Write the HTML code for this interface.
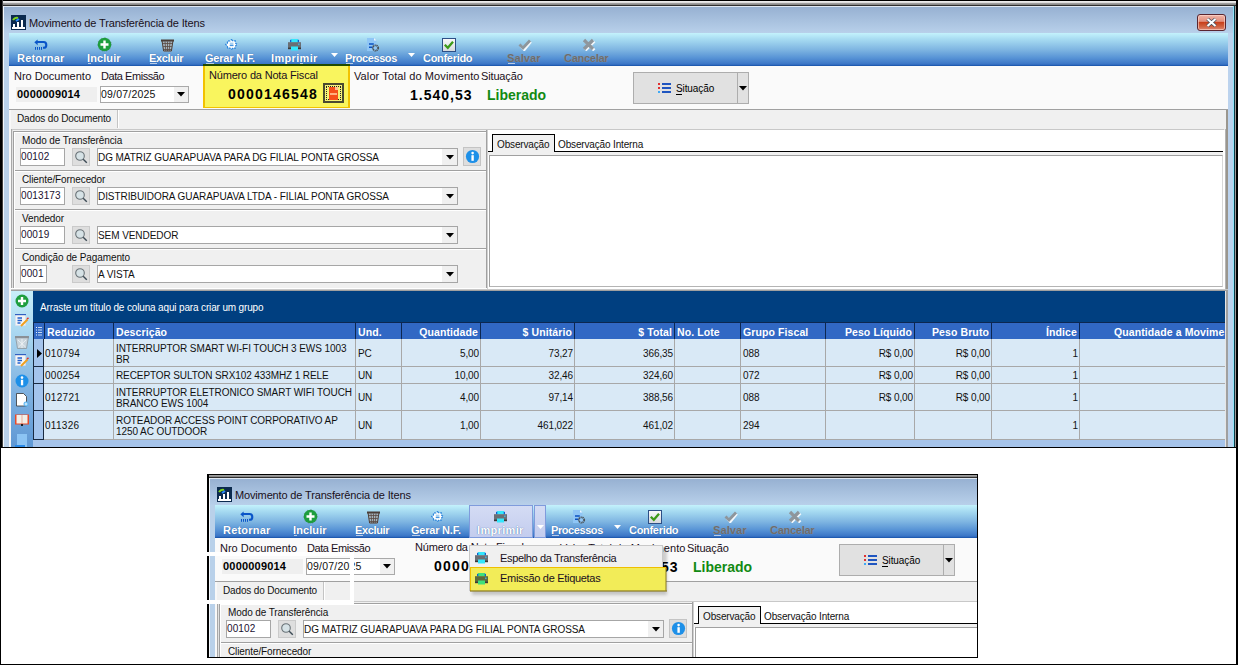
<!DOCTYPE html><html><head><meta charset="utf-8"><style>*{margin:0;padding:0}
body{width:1238px;height:666px;position:relative;overflow:hidden;background:#fff;font-family:"Liberation Sans",sans-serif}
.r,.t{position:absolute}
.t{white-space:nowrap}
</style></head><body><div class="r" style="left:0;top:0;width:1238px;height:448px;overflow:hidden">
<div class="r" style="left:0px;top:0px;width:1238px;height:448px;background:#b9d1ea"></div>
<div class="r" style="left:0px;top:0px;width:1238px;height:1px;background:#000"></div>
<div class="r" style="left:0px;top:1px;width:1238px;height:2px;background:linear-gradient(#f4f4f4,#d8d8d8)"></div>
<div class="r" style="left:0px;top:3px;width:1238px;height:2px;background:linear-gradient(#a8a8a8,#808080)"></div>
<div class="r" style="left:0px;top:5px;width:1238px;height:1px;background:#303030"></div>
<div class="r" style="left:0px;top:6px;width:1238px;height:1px;background:#dfe8f2"></div>
<div class="r" style="left:3px;top:7px;width:1232px;height:26px;background:linear-gradient(#97b1d2,#b8d0ea)"></div>
<div class="r" style="left:0px;top:0px;width:2px;height:448px;background:#000"></div>
<div class="r" style="left:2px;top:0px;width:1px;height:448px;background:#404040"></div>
<div class="r" style="left:3px;top:6px;width:1px;height:442px;background:#f4f8fc"></div>
<div class="r" style="left:9px;top:33px;width:2px;height:415px;background:#f4f4f4"></div>
<div class="r" style="left:1228px;top:33px;width:6px;height:415px;background:#bcd3ee"></div>
<div class="r" style="left:1233px;top:6px;width:1px;height:442px;background:#8ee4f8"></div>
<div class="r" style="left:1234px;top:6px;width:1px;height:442px;background:#0d3a48"></div>
<div class="r" style="left:1235px;top:6px;width:1px;height:442px;background:#a09a98"></div>
<div class="r" style="left:1236px;top:0px;width:2px;height:448px;background:#000"></div>
<div class="r" style="left:1197px;top:14px;width:29px;height:17px;border:1px solid #5a2630;border-radius:3px;box-sizing:border-box;background:linear-gradient(#f0b4a8 0%,#e2907e 42%,#c8401c 50%,#d0603e 75%,#dc8874 100%);box-shadow:inset 0 0 0 1px rgba(255,220,210,0.6)"></div>
<svg class="r" style="left:1197px;top:14px" width="29" height="17"><path d="M10.5 5 L18.5 12 M18.5 5 L10.5 12" stroke="#3a4a5a" stroke-width="3.6"/><path d="M10.5 5 L18.5 12 M18.5 5 L10.5 12" stroke="#fff" stroke-width="2.2"/></svg>
<svg class="r" style="left:11px;top:15px" width="15" height="15"><rect x="0" y="0" width="15" height="15" fill="#0b2a4e"/><path d="M2 5 Q4 2 7 3" stroke="#7ed321" stroke-width="2" fill="none"/><path d="M5 6 L8 4" stroke="#2a8cff" stroke-width="2"/><rect x="2" y="9" width="2" height="3" fill="#fff"/><rect x="6" y="7" width="2" height="5" fill="#fff"/><rect x="10" y="5" width="2" height="7" fill="#fff"/><rect x="1" y="12" width="13" height="2" fill="#fff"/></svg>
<div class="t" style="left:29px;top:18px;font-size:11px;line-height:11px;color:#1a1020;letter-spacing:-0.15px">Movimento de Transferência de Itens</div>
<div class="r" style="left:9px;top:33px;width:1219px;height:33px;background:linear-gradient(#c4f2fc 0%,#a8dcf2 18%,#7fb6e2 50%,#5894d6 75%,#3e79c8 92%,#245fb8 100%)"></div>
<div class="r" style="left:9px;top:65px;width:1219px;height:1px;background:#1f5ab0"></div>
<div class="t" style="left:17px;top:53px;font-size:11px;line-height:11px;font-weight:bold;color:#fff;text-shadow:0 0 1px #2a5a9a;letter-spacing:0.2px">Retornar</div>
<div class="t" style="left:87px;top:53px;font-size:11px;line-height:11px;font-weight:bold;color:#fff;text-shadow:0 0 1px #2a5a9a;letter-spacing:0.1px">Incluir</div>
<div class="t" style="left:149px;top:53px;font-size:11px;line-height:11px;font-weight:bold;color:#fff;text-shadow:0 0 1px #2a5a9a;letter-spacing:-0.35px">Excluir</div>
<div class="t" style="left:205px;top:53px;font-size:11px;line-height:11px;font-weight:bold;color:#fff;text-shadow:0 0 1px #2a5a9a;letter-spacing:-0.22px">Gerar N.F.</div>
<div class="t" style="left:271px;top:53px;font-size:11px;line-height:11px;font-weight:bold;color:#fff;text-shadow:0 0 1px #2a5a9a;letter-spacing:0.34px">Imprimir</div>
<div class="t" style="left:345px;top:53px;font-size:11px;line-height:11px;font-weight:bold;color:#fff;text-shadow:0 0 1px #2a5a9a;letter-spacing:-0.42px">Processos</div>
<div class="t" style="left:423px;top:53px;font-size:11px;line-height:11px;font-weight:bold;color:#fff;text-shadow:0 0 1px #2a5a9a;letter-spacing:-0.3px">Conferido</div>
<div class="t" style="left:507px;top:53px;font-size:11px;line-height:11px;font-weight:bold;color:#6c6c6c;text-shadow:0 0 1px #9ab;letter-spacing:0.1px">Salvar</div>
<div class="t" style="left:564px;top:53px;font-size:11px;line-height:11px;font-weight:bold;color:#6c6c6c;text-shadow:0 0 1px #9ab;letter-spacing:-0.26px">Cancelar</div>
<div class="r" style="left:88px;top:63px;width:3px;height:1px;background:#b8cce6"></div>
<div class="r" style="left:150px;top:63px;width:7px;height:1px;background:#b8cce6"></div>
<div class="r" style="left:206px;top:63px;width:8px;height:1px;background:#b8cce6"></div>
<div class="r" style="left:300px;top:63px;width:3px;height:1px;background:#b8cce6"></div>
<div class="r" style="left:346px;top:63px;width:7px;height:1px;background:#b8cce6"></div>
<div class="r" style="left:508px;top:63px;width:7px;height:1px;background:#b8cce6"></div>
<svg class="r" style="left:331px;top:53px" width="7" height="4"><path d="M0 0 L7 0 L3.5 4Z" fill="#fff"/></svg>
<svg class="r" style="left:408px;top:53px" width="7" height="4"><path d="M0 0 L7 0 L3.5 4Z" fill="#fff"/></svg>
<svg class="r" style="left:34px;top:39px" width="14" height="12"><path d="M0.3 3.2 L3.6 0.4 V6.2Z" fill="#0a55c8"/><path d="M3 3 H9.6 A2.7 2.9 0 0 1 9.6 8.8 H9" stroke="#0a55c8" stroke-width="2.1" fill="none"/><path d="M1.5 8 V10.8 M3.5 8 V10.8 M5.5 8 V10.8 M7.5 8 V10.8" stroke="#0a55c8" stroke-width="1"/></svg>
<svg class="r" style="left:97px;top:37px" width="15" height="15"><circle cx="7.5" cy="7.5" r="6.8" fill="#1e9e3e" stroke="#4a4a4a" stroke-width="0.4" stroke-dasharray="1 3"/><path d="M7.5 3.5 V11.5 M3.5 7.5 H11.5" stroke="#fff" stroke-width="2.4"/></svg>
<svg class="r" style="left:161px;top:39px" width="13" height="13"><path d="M0.5 1 H12.5 L10.8 12.5 H2.2Z" fill="#a4b4be"/><path d="M1.8 4.5 H11.2 M2.2 7.5 H10.8 M2.6 10.5 H10.4 M4 2.5 L4.8 12 M6.5 2.5 V12 M9 2.5 L8.2 12" stroke="#5a4a42" stroke-width="0.8"/><path d="M1 1.5 L2.6 12 H10.4 L12 1.5" fill="none" stroke="#4a3e38" stroke-width="1"/><rect x="0" y="0.5" width="13" height="2" fill="#4a3e38"/></svg>
<svg class="r" style="left:225px;top:39px" width="13" height="11"><path d="M6.5 0.6 L8 2 L10.4 1.8 L10.6 4.2 L12.3 5.5 L10.6 6.8 L10.4 9.2 L8 9 L6.5 10.4 L5 9 L2.6 9.2 L2.4 6.8 L0.7 5.5 L2.4 4.2 L2.6 1.8 L5 2Z" fill="#fff" stroke="#2d86dc" stroke-width="1.2" stroke-dasharray="2.2 1"/><rect x="4.8" y="3.6" width="3.6" height="3.4" fill="#a8d0f0"/><rect x="4.8" y="6.2" width="3.6" height="0.9" fill="#2d86dc"/></svg>
<svg class="r" style="left:288px;top:39px" width="14" height="12"><rect x="3" y="0" width="7" height="3.5" fill="#34e6fc"/><rect x="2" y="0.8" width="1.3" height="2.6" fill="#1060d0"/><rect x="9.7" y="0.8" width="1.3" height="2.6" fill="#1060d0"/><rect x="0" y="3.2" width="13" height="6.2" fill="#6a6e74"/><rect x="3" y="7.5" width="7" height="4" fill="#34e6fc"/><rect x="0" y="8.6" width="3" height="1.6" fill="#3a3a3a"/><rect x="10" y="8.6" width="3" height="1.6" fill="#3a3a3a"/><rect x="10.2" y="4.5" width="1.3" height="1.6" fill="#40b8f0"/></svg>
<svg class="r" style="left:367px;top:38px" width="13" height="14"><path d="M0 0 H7 L9.5 2.5 V13 H0Z" fill="#8fc6f6"/><path d="M7 0 V2.5 H9.5Z" fill="#eef6ff"/><path d="M2 6 H6.8 M2 9.3 H5.5" stroke="#0a50c0" stroke-width="1.4"/><circle cx="8.5" cy="10" r="2.7" fill="none" stroke="#4a5258" stroke-width="1.8" stroke-dasharray="1.3 0.6"/></svg>
<svg class="r" style="left:442px;top:38px" width="14" height="14"><defs><linearGradient id="cbg" x1="0" y1="0" x2="0" y2="1"><stop offset="0" stop-color="#fafafa"/><stop offset="1" stop-color="#d4d8dc"/></linearGradient></defs><rect x="0.5" y="0.5" width="13" height="13" fill="url(#cbg)" stroke="#2d4f86"/><path d="M2.8 6.8 L5.8 9.8 L11 3.8" stroke="#3c9a18" stroke-width="2.3" fill="none"/></svg>
<svg class="r" style="left:518px;top:39px" width="14" height="12"><path d="M2.5 6.5 L5.5 10 L12 2" stroke="#f4f8fc" stroke-width="2.6" fill="none" transform="translate(0.8,0.8)"/><path d="M1.5 5.5 L5 9 L12 1.5" stroke="#8e969c" stroke-width="2.8" fill="none"/></svg>
<svg class="r" style="left:582px;top:38px" width="14" height="13"><path d="M2.5 2.5 L11.5 11.5 M11.5 2.5 L2.5 11.5" stroke="#f4f8fc" stroke-width="3" fill="none" transform="translate(0.8,0.8)"/><path d="M2 2 L11 11 M11 2 L2 11" stroke="#8e969c" stroke-width="3.2" fill="none"/></svg>
<div class="r" style="left:9px;top:66px;width:1219px;height:43px;background:#fafafa"></div>
<div class="r" style="left:9px;top:109px;width:1219px;height:1px;background:#a0a0a0"></div>
<div class="t" style="left:14px;top:71px;font-size:11px;line-height:11px;color:#1a1020;">Nro Documento</div>
<div class="t" style="left:101px;top:71px;font-size:11px;line-height:11px;color:#1a1020;letter-spacing:-0.45px">Data Emissão</div>
<div class="r" style="left:16px;top:87px;width:81px;height:15px;background:#efefef"></div>
<div class="t" style="left:17px;top:89px;font-size:11px;line-height:11px;font-weight:bold;letter-spacing:0.2px">0000009014</div>
<div class="r" style="left:100px;top:86px;width:89px;height:17px;background:#fff;border:1px solid #a9a9a9;box-sizing:border-box"></div>
<div class="t" style="left:101px;top:89px;font-size:10.5px;line-height:10.5px;color:#111;letter-spacing:0.2px">09/07/2025</div>
<div class="r" style="left:174px;top:87px;width:14px;height:15px;background:#f0f0f0"></div>
<svg class="r" style="left:177px;top:92px" width="8" height="5"><path d="M0 0 H8 L4 4.5Z" fill="#000"/></svg>
<div class="r" style="left:203px;top:64px;width:147px;height:44px;background:#f9f55e;border-left:2px solid #f2c200;border-right:2px solid #f2c200;border-bottom:1px solid #f2c200;box-sizing:border-box"></div>
<div class="r" style="left:203px;top:64px;width:147px;height:2px;background:#1f4a00"></div>
<div class="t" style="left:209px;top:70px;font-size:11px;line-height:11px;color:#1a1020;letter-spacing:-0.18px">Número da Nota Fiscal</div>
<div class="t" style="left:228px;top:87px;font-size:14px;line-height:14px;font-weight:bold;letter-spacing:1.2px">0000146548</div>
<div class="r" style="left:323px;top:83px;width:21px;height:20px;background:#f6f276;border:2px solid #4a4a30;box-sizing:border-box"></div>
<div class="r" style="left:326px;top:86px;width:15px;height:14px;border:1px dotted #222;box-sizing:border-box"></div>
<div class="r" style="left:329px;top:87px;width:9px;height:13px;background:#f5501a"></div>
<div class="r" style="left:335px;top:87px;width:3px;height:3px;background:#ffc090"></div>
<div class="r" style="left:330px;top:93px;width:7px;height:2px;background:#ffb080"></div>
<div class="t" style="left:354px;top:71px;font-size:11px;line-height:11px;color:#1a1020;letter-spacing:0.1px">Valor Total do Movimento</div>
<div class="t" style="left:481px;top:71px;font-size:11px;line-height:11px;color:#1a1020;letter-spacing:-0.15px">Situação</div>
<div class="t" style="left:410px;top:88px;font-size:14px;line-height:14px;font-weight:bold;letter-spacing:1px">1.540,53</div>
<div class="t" style="left:487px;top:88px;font-size:14px;line-height:14px;font-weight:bold;color:#128a12;">Liberado</div>
<div class="r" style="left:633px;top:72px;width:116px;height:32px;background:#e1e1e1;border:1px solid #adadad;box-sizing:border-box"></div>
<div class="r" style="left:737px;top:73px;width:1px;height:30px;background:#adadad"></div>
<svg class="r" style="left:739px;top:86px" width="8" height="5"><path d="M0 0 H8 L4 4.5Z" fill="#000"/></svg>
<svg class="r" style="left:658px;top:83px" width="13" height="10"><rect x="0" y="0" width="2" height="2" fill="#e03030"/><rect x="0" y="4" width="2" height="2" fill="#e03030"/><rect x="0" y="8" width="2" height="2" fill="#3fa9f5"/><rect x="4" y="0" width="9" height="2" fill="#1f55c0"/><rect x="4" y="4" width="9" height="2" fill="#1f55c0"/><rect x="4" y="8" width="9" height="2" fill="#1f55c0"/></svg>
<div class="t" style="left:676px;top:84px;font-size:10px;line-height:10px;letter-spacing:-0.1px">Situação</div>
<div class="r" style="left:676px;top:94px;width:6px;height:1px;background:#000"></div>
<div class="r" style="left:11px;top:110px;width:1217px;height:337px;background:#f0f0f0"></div>
<div class="r" style="left:9px;top:110px;width:2px;height:337px;background:#f8f8f8"></div>
<div class="r" style="left:117px;top:110px;width:1px;height:18px;background:#c4c4c4"></div>
<div class="r" style="left:118px;top:110px;width:1px;height:18px;background:#fff"></div>
<div class="t" style="left:17px;top:114px;font-size:10px;line-height:10px;color:#111;letter-spacing:-0.15px">Dados do Documento</div>
<div class="r" style="left:11px;top:129px;width:1217px;height:1px;background:#c8c8c8"></div>
<div class="r" style="left:11px;top:129px;width:1px;height:161px;background:#a8a8a8"></div>
<div class="r" style="left:12px;top:130px;width:1px;height:159px;background:#e0e0e0"></div>
<div class="r" style="left:1226px;top:110px;width:2px;height:180px;background:#9a968e"></div>
<div class="r" style="left:1224px;top:129px;width:1px;height:161px;background:#e8e8e8"></div>
<div class="r" style="left:1225px;top:129px;width:1px;height:161px;background:#b4b4b4"></div>
<div class="r" style="left:13px;top:131px;width:473px;height:1px;background:#a0a0a0"></div>
<div class="r" style="left:13px;top:131px;width:1px;height:157px;background:#a0a0a0"></div>
<div class="r" style="left:14px;top:132px;width:472px;height:1px;background:#fff"></div>
<div class="r" style="left:14px;top:132px;width:1px;height:156px;background:#fff"></div>
<div class="r" style="left:486px;top:130px;width:1px;height:160px;background:#a0a0a0"></div>
<div class="r" style="left:487px;top:130px;width:1px;height:160px;background:#d0d0d0"></div>
<div class="r" style="left:11px;top:288px;width:476px;height:1px;background:#fff"></div>
<div class="r" style="left:11px;top:289px;width:1217px;height:1px;background:#c8c8c8"></div>
<div class="r" style="left:11px;top:290px;width:1217px;height:1px;background:#a0a0a0"></div>
<div class="t" style="left:22px;top:136px;font-size:10px;line-height:10px;color:#111;letter-spacing:-0.1px">Modo de Transferência</div>
<div class="r" style="left:20px;top:148px;width:45px;height:18px;background:#fff;border:1px solid #a6a6a6;box-sizing:border-box"></div>
<div class="t" style="left:21px;top:152px;font-size:10px;line-height:10px;color:#1a1030;letter-spacing:0.1px">00102</div>
<div class="r" style="left:72px;top:148px;width:18px;height:18px;background:#dedede;border:1px solid #cacaca;box-sizing:border-box"></div>
<svg class="r" style="left:74px;top:150px" width="14" height="14"><circle cx="6" cy="6" r="4.3" fill="#d6e2e6" stroke="#6a7378" stroke-width="1.1"/><path d="M9.2 9.2 L12.8 12.8" stroke="#3c4a55" stroke-width="1.4"/></svg>
<div class="r" style="left:97px;top:148px;width:361px;height:18px;background:#fff;border:1px solid #a6a6a6;box-sizing:border-box"></div>
<div class="t" style="left:98px;top:153px;font-size:10px;line-height:10px;color:#111;letter-spacing:-0.07px">DG MATRIZ GUARAPUAVA PARA DG FILIAL PONTA GROSSA</div>
<div class="r" style="left:442px;top:149px;width:15px;height:16px;background:#f0f0f0"></div>
<svg class="r" style="left:446px;top:155px" width="8" height="5"><path d="M0 0 H8 L4 4.5Z" fill="#000"/></svg>
<div class="r" style="left:463px;top:147px;width:18px;height:19px;background:#dedede;border:1px solid #c4c4c4;box-sizing:border-box"></div>
<svg class="r" style="left:465px;top:149px" width="15" height="15"><circle cx="7.5" cy="7.5" r="6.6" fill="#1e90e8"/><rect x="6.4" y="6.2" width="2.4" height="5.6" fill="#fff"/><circle cx="7.6" cy="4.1" r="1.3" fill="#fff"/></svg>
<div class="r" style="left:15px;top:170px;width:471px;height:1px;background:#a0a0a0"></div>
<div class="r" style="left:15px;top:171px;width:471px;height:1px;background:#fff"></div>
<div class="t" style="left:22px;top:175px;font-size:10px;line-height:10px;color:#111;letter-spacing:-0.1px">Cliente/Fornecedor</div>
<div class="r" style="left:20px;top:187px;width:45px;height:18px;background:#fff;border:1px solid #a6a6a6;box-sizing:border-box"></div>
<div class="t" style="left:21px;top:191px;font-size:10px;line-height:10px;color:#1a1030;letter-spacing:0.1px">0013173</div>
<div class="r" style="left:72px;top:187px;width:18px;height:18px;background:#dedede;border:1px solid #cacaca;box-sizing:border-box"></div>
<svg class="r" style="left:74px;top:189px" width="14" height="14"><circle cx="6" cy="6" r="4.3" fill="#d6e2e6" stroke="#6a7378" stroke-width="1.1"/><path d="M9.2 9.2 L12.8 12.8" stroke="#3c4a55" stroke-width="1.4"/></svg>
<div class="r" style="left:97px;top:187px;width:361px;height:18px;background:#fff;border:1px solid #a6a6a6;box-sizing:border-box"></div>
<div class="t" style="left:98px;top:192px;font-size:10px;line-height:10px;color:#111;letter-spacing:-0.07px">DISTRIBUIDORA GUARAPUAVA LTDA - FILIAL PONTA GROSSA</div>
<div class="r" style="left:442px;top:188px;width:15px;height:16px;background:#f0f0f0"></div>
<svg class="r" style="left:446px;top:194px" width="8" height="5"><path d="M0 0 H8 L4 4.5Z" fill="#000"/></svg>
<div class="r" style="left:15px;top:209px;width:471px;height:1px;background:#a0a0a0"></div>
<div class="r" style="left:15px;top:210px;width:471px;height:1px;background:#fff"></div>
<div class="t" style="left:22px;top:214px;font-size:10px;line-height:10px;color:#111;letter-spacing:-0.1px">Vendedor</div>
<div class="r" style="left:20px;top:226px;width:45px;height:18px;background:#fff;border:1px solid #a6a6a6;box-sizing:border-box"></div>
<div class="t" style="left:21px;top:230px;font-size:10px;line-height:10px;color:#1a1030;letter-spacing:0.1px">00019</div>
<div class="r" style="left:72px;top:226px;width:18px;height:18px;background:#dedede;border:1px solid #cacaca;box-sizing:border-box"></div>
<svg class="r" style="left:74px;top:228px" width="14" height="14"><circle cx="6" cy="6" r="4.3" fill="#d6e2e6" stroke="#6a7378" stroke-width="1.1"/><path d="M9.2 9.2 L12.8 12.8" stroke="#3c4a55" stroke-width="1.4"/></svg>
<div class="r" style="left:97px;top:226px;width:361px;height:18px;background:#fff;border:1px solid #a6a6a6;box-sizing:border-box"></div>
<div class="t" style="left:98px;top:231px;font-size:10px;line-height:10px;color:#111;letter-spacing:-0.07px">SEM VENDEDOR</div>
<div class="r" style="left:442px;top:227px;width:15px;height:16px;background:#f0f0f0"></div>
<svg class="r" style="left:446px;top:233px" width="8" height="5"><path d="M0 0 H8 L4 4.5Z" fill="#000"/></svg>
<div class="r" style="left:15px;top:248px;width:471px;height:1px;background:#a0a0a0"></div>
<div class="r" style="left:15px;top:249px;width:471px;height:1px;background:#fff"></div>
<div class="t" style="left:22px;top:253px;font-size:10px;line-height:10px;color:#111;letter-spacing:-0.1px">Condição de Pagamento</div>
<div class="r" style="left:20px;top:265px;width:27px;height:18px;background:#fff;border:1px solid #a6a6a6;box-sizing:border-box"></div>
<div class="t" style="left:21px;top:269px;font-size:10px;line-height:10px;color:#1a1030;letter-spacing:0.1px">0001</div>
<div class="r" style="left:72px;top:265px;width:18px;height:18px;background:#dedede;border:1px solid #cacaca;box-sizing:border-box"></div>
<svg class="r" style="left:74px;top:267px" width="14" height="14"><circle cx="6" cy="6" r="4.3" fill="#d6e2e6" stroke="#6a7378" stroke-width="1.1"/><path d="M9.2 9.2 L12.8 12.8" stroke="#3c4a55" stroke-width="1.4"/></svg>
<div class="r" style="left:97px;top:265px;width:361px;height:18px;background:#fff;border:1px solid #a6a6a6;box-sizing:border-box"></div>
<div class="t" style="left:98px;top:270px;font-size:10px;line-height:10px;color:#111;letter-spacing:-0.07px">A VISTA</div>
<div class="r" style="left:442px;top:266px;width:15px;height:16px;background:#f0f0f0"></div>
<svg class="r" style="left:446px;top:272px" width="8" height="5"><path d="M0 0 H8 L4 4.5Z" fill="#000"/></svg>
<div class="r" style="left:488px;top:130px;width:737px;height:159px;background:#fff"></div>
<div class="r" style="left:488px;top:151px;width:735px;height:1px;background:#000"></div>
<div class="r" style="left:492px;top:134px;width:63px;height:18px;background:#f0f0f0;border:1px solid #000;border-bottom:none;box-sizing:border-box"></div>
<div class="r" style="left:488px;top:152px;width:735px;height:3px;background:#f0f0f0"></div>
<div class="t" style="left:497px;top:140px;font-size:10px;line-height:10px;color:#111;letter-spacing:-0.15px">Observação</div>
<div class="t" style="left:558px;top:140px;font-size:10px;line-height:10px;color:#111;letter-spacing:-0.15px">Observação Interna</div>
<div class="r" style="left:489px;top:155px;width:734px;height:132px;background:#fff;border:1px solid #a0a0a0;border-right-color:#d8d8d8;border-bottom-color:#b4b4b4;box-sizing:border-box"></div>
<div class="r" style="left:11px;top:291px;width:1214px;height:156px;background:#a6c6ec"></div>
<div class="r" style="left:11px;top:291px;width:22px;height:156px;background:linear-gradient(#c8eef9 0%,#a6d4ef 30%,#7fb1e0 65%,#5f98d4 100%)"></div>
<div class="r" style="left:33px;top:291px;width:1192px;height:32px;background:#003f80"></div>
<div class="t" style="left:40px;top:303px;font-size:10px;line-height:10px;color:#fff;letter-spacing:-0.15px">Arraste um título de coluna aqui para criar um grupo</div>
<div class="r" style="left:1225px;top:291px;width:1px;height:156px;background:#e6e6e6"></div>
<div class="r" style="left:1226px;top:291px;width:2px;height:156px;background:#a0a0a0"></div>
<div class="r" style="left:33px;top:322px;width:1192px;height:18px;background:#0c2750"></div>
<div class="r" style="left:34px;top:323px;width:10px;height:16px;background:#3168c4"></div>
<div class="r" style="left:45px;top:323px;width:68px;height:16px;background:#3168c4"></div>
<div class="r" style="left:114px;top:323px;width:241px;height:16px;background:#3168c4"></div>
<div class="r" style="left:356px;top:323px;width:45px;height:16px;background:#3168c4"></div>
<div class="r" style="left:402px;top:323px;width:78px;height:16px;background:#3168c4"></div>
<div class="r" style="left:481px;top:323px;width:93px;height:16px;background:#3168c4"></div>
<div class="r" style="left:575px;top:323px;width:99px;height:16px;background:#3168c4"></div>
<div class="r" style="left:675px;top:323px;width:65px;height:16px;background:#3168c4"></div>
<div class="r" style="left:741px;top:323px;width:84px;height:16px;background:#3168c4"></div>
<div class="r" style="left:826px;top:323px;width:88px;height:16px;background:#3168c4"></div>
<div class="r" style="left:915px;top:323px;width:76px;height:16px;background:#3168c4"></div>
<div class="r" style="left:992px;top:323px;width:87px;height:16px;background:#3168c4"></div>
<div class="r" style="left:1080px;top:323px;width:145px;height:16px;background:#3168c4"></div>
<svg class="r" style="left:35px;top:326px" width="8" height="11"><path d="M1 1.5h1M1 4h1M1 6.5h1M1 9h1" stroke="#e8f0ff" stroke-width="1"/><path d="M3 1.5h4M3 4h4M3 6.5h4M3 9h4" stroke="#c8d8f0" stroke-width="1.2"/></svg>
<div class="t" style="left:47px;top:327px;font-size:10.5px;line-height:10.5px;font-weight:bold;color:#fff;letter-spacing:0.1px">Reduzido</div>
<div class="t" style="left:116px;top:327px;font-size:10.5px;line-height:10.5px;font-weight:bold;color:#fff;letter-spacing:0.1px">Descrição</div>
<div class="t" style="left:358px;top:327px;font-size:10.5px;line-height:10.5px;font-weight:bold;color:#fff;letter-spacing:0.1px">Und.</div>
<div class="t" style="left:358px;width:120px;text-align:right;top:327px;font-size:10.5px;line-height:10.5px;font-weight:bold;color:#fff;letter-spacing:0.1px">Quantidade</div>
<div class="t" style="left:452px;width:120px;text-align:right;top:327px;font-size:10.5px;line-height:10.5px;font-weight:bold;color:#fff;letter-spacing:0.1px">$ Unitário</div>
<div class="t" style="left:552px;width:120px;text-align:right;top:327px;font-size:10.5px;line-height:10.5px;font-weight:bold;color:#fff;letter-spacing:0.1px">$ Total</div>
<div class="t" style="left:677px;top:327px;font-size:10.5px;line-height:10.5px;font-weight:bold;color:#fff;letter-spacing:0.1px">No. Lote</div>
<div class="t" style="left:743px;top:327px;font-size:10.5px;line-height:10.5px;font-weight:bold;color:#fff;letter-spacing:0.1px">Grupo Fiscal</div>
<div class="t" style="left:792px;width:120px;text-align:right;top:327px;font-size:10.5px;line-height:10.5px;font-weight:bold;color:#fff;letter-spacing:0.1px">Peso Líquido</div>
<div class="t" style="left:869px;width:120px;text-align:right;top:327px;font-size:10.5px;line-height:10.5px;font-weight:bold;color:#fff;letter-spacing:0.1px">Peso Bruto</div>
<div class="t" style="left:957px;width:120px;text-align:right;top:327px;font-size:10.5px;line-height:10.5px;font-weight:bold;color:#fff;letter-spacing:0.1px">Índice</div>
<div class="r" style="left:1080px;top:323px;width:145px;height:16px;overflow:hidden"><div class="t" style="left:34px;top:4px;font-size:10.5px;line-height:10.5px;font-weight:bold;color:#fff;letter-spacing:0.1px">Quantidade a Movimentar</div></div>
<div class="r" style="left:44px;top:339px;width:1181px;height:28px;background:#d9e9f6"></div>
<div class="r" style="left:33px;top:339px;width:11px;height:28px;background:#a4c4ec"></div>
<div class="r" style="left:33px;top:366px;width:11px;height:1px;background:#1a2a40"></div>
<div class="r" style="left:44px;top:366px;width:1181px;height:1px;background:#a8a8a8"></div>
<div class="r" style="left:33px;top:339px;width:1px;height:28px;background:#1a2a40"></div>
<div class="r" style="left:43px;top:339px;width:1px;height:28px;background:#1a2a40"></div>
<div class="r" style="left:113px;top:339px;width:1px;height:27px;background:#a8a8a8"></div>
<div class="r" style="left:355px;top:339px;width:1px;height:27px;background:#a8a8a8"></div>
<div class="r" style="left:401px;top:339px;width:1px;height:27px;background:#a8a8a8"></div>
<div class="r" style="left:480px;top:339px;width:1px;height:27px;background:#a8a8a8"></div>
<div class="r" style="left:574px;top:339px;width:1px;height:27px;background:#a8a8a8"></div>
<div class="r" style="left:674px;top:339px;width:1px;height:27px;background:#a8a8a8"></div>
<div class="r" style="left:740px;top:339px;width:1px;height:27px;background:#a8a8a8"></div>
<div class="r" style="left:825px;top:339px;width:1px;height:27px;background:#a8a8a8"></div>
<div class="r" style="left:914px;top:339px;width:1px;height:27px;background:#a8a8a8"></div>
<div class="r" style="left:991px;top:339px;width:1px;height:27px;background:#a8a8a8"></div>
<div class="r" style="left:1079px;top:339px;width:1px;height:27px;background:#a8a8a8"></div>
<div class="t" style="left:45px;top:349px;font-size:10px;line-height:10px;color:#111;letter-spacing:0.3px">010794</div>
<div class="t" style="left:116px;top:344px;font-size:10px;line-height:10px;color:#111;letter-spacing:-0.08px">INTERRUPTOR SMART WI-FI TOUCH 3 EWS 1003</div>
<div class="t" style="left:116px;top:355px;font-size:10px;line-height:10px;color:#111;letter-spacing:-0.08px">BR</div>
<div class="t" style="left:358px;top:349px;font-size:10px;line-height:10px;color:#111;letter-spacing:-0.1px">PC</div>
<div class="t" style="left:379px;width:100px;text-align:right;top:349px;font-size:10px;line-height:10px;color:#111;letter-spacing:-0.1px">5,00</div>
<div class="t" style="left:473px;width:100px;text-align:right;top:349px;font-size:10px;line-height:10px;color:#111;letter-spacing:-0.1px">73,27</div>
<div class="t" style="left:573px;width:100px;text-align:right;top:349px;font-size:10px;line-height:10px;color:#111;letter-spacing:-0.1px">366,35</div>
<div class="t" style="left:743px;top:349px;font-size:10px;line-height:10px;color:#111;letter-spacing:-0.1px">088</div>
<div class="t" style="left:813px;width:100px;text-align:right;top:349px;font-size:10px;line-height:10px;color:#111;letter-spacing:-0.1px">R$ 0,00</div>
<div class="t" style="left:890px;width:100px;text-align:right;top:349px;font-size:10px;line-height:10px;color:#111;letter-spacing:-0.1px">R$ 0,00</div>
<div class="t" style="left:978px;width:100px;text-align:right;top:349px;font-size:10px;line-height:10px;color:#111;letter-spacing:-0.1px">1</div>
<div class="r" style="left:44px;top:367px;width:1181px;height:17px;background:#d9e9f6"></div>
<div class="r" style="left:33px;top:367px;width:11px;height:17px;background:#a4c4ec"></div>
<div class="r" style="left:33px;top:383px;width:11px;height:1px;background:#1a2a40"></div>
<div class="r" style="left:44px;top:383px;width:1181px;height:1px;background:#a8a8a8"></div>
<div class="r" style="left:33px;top:367px;width:1px;height:17px;background:#1a2a40"></div>
<div class="r" style="left:43px;top:367px;width:1px;height:17px;background:#1a2a40"></div>
<div class="r" style="left:113px;top:367px;width:1px;height:16px;background:#a8a8a8"></div>
<div class="r" style="left:355px;top:367px;width:1px;height:16px;background:#a8a8a8"></div>
<div class="r" style="left:401px;top:367px;width:1px;height:16px;background:#a8a8a8"></div>
<div class="r" style="left:480px;top:367px;width:1px;height:16px;background:#a8a8a8"></div>
<div class="r" style="left:574px;top:367px;width:1px;height:16px;background:#a8a8a8"></div>
<div class="r" style="left:674px;top:367px;width:1px;height:16px;background:#a8a8a8"></div>
<div class="r" style="left:740px;top:367px;width:1px;height:16px;background:#a8a8a8"></div>
<div class="r" style="left:825px;top:367px;width:1px;height:16px;background:#a8a8a8"></div>
<div class="r" style="left:914px;top:367px;width:1px;height:16px;background:#a8a8a8"></div>
<div class="r" style="left:991px;top:367px;width:1px;height:16px;background:#a8a8a8"></div>
<div class="r" style="left:1079px;top:367px;width:1px;height:16px;background:#a8a8a8"></div>
<div class="t" style="left:45px;top:371px;font-size:10px;line-height:10px;color:#111;letter-spacing:0.3px">000254</div>
<div class="t" style="left:116px;top:371px;font-size:10px;line-height:10px;color:#111;letter-spacing:-0.1px">RECEPTOR SULTON SRX102 433MHZ 1 RELE</div>
<div class="t" style="left:358px;top:371px;font-size:10px;line-height:10px;color:#111;letter-spacing:-0.1px">UN</div>
<div class="t" style="left:379px;width:100px;text-align:right;top:371px;font-size:10px;line-height:10px;color:#111;letter-spacing:-0.1px">10,00</div>
<div class="t" style="left:473px;width:100px;text-align:right;top:371px;font-size:10px;line-height:10px;color:#111;letter-spacing:-0.1px">32,46</div>
<div class="t" style="left:573px;width:100px;text-align:right;top:371px;font-size:10px;line-height:10px;color:#111;letter-spacing:-0.1px">324,60</div>
<div class="t" style="left:743px;top:371px;font-size:10px;line-height:10px;color:#111;letter-spacing:-0.1px">072</div>
<div class="t" style="left:813px;width:100px;text-align:right;top:371px;font-size:10px;line-height:10px;color:#111;letter-spacing:-0.1px">R$ 0,00</div>
<div class="t" style="left:890px;width:100px;text-align:right;top:371px;font-size:10px;line-height:10px;color:#111;letter-spacing:-0.1px">R$ 0,00</div>
<div class="t" style="left:978px;width:100px;text-align:right;top:371px;font-size:10px;line-height:10px;color:#111;letter-spacing:-0.1px">1</div>
<div class="r" style="left:44px;top:384px;width:1181px;height:27px;background:#d9e9f6"></div>
<div class="r" style="left:33px;top:384px;width:11px;height:27px;background:#a4c4ec"></div>
<div class="r" style="left:33px;top:410px;width:11px;height:1px;background:#1a2a40"></div>
<div class="r" style="left:44px;top:410px;width:1181px;height:1px;background:#a8a8a8"></div>
<div class="r" style="left:33px;top:384px;width:1px;height:27px;background:#1a2a40"></div>
<div class="r" style="left:43px;top:384px;width:1px;height:27px;background:#1a2a40"></div>
<div class="r" style="left:113px;top:384px;width:1px;height:26px;background:#a8a8a8"></div>
<div class="r" style="left:355px;top:384px;width:1px;height:26px;background:#a8a8a8"></div>
<div class="r" style="left:401px;top:384px;width:1px;height:26px;background:#a8a8a8"></div>
<div class="r" style="left:480px;top:384px;width:1px;height:26px;background:#a8a8a8"></div>
<div class="r" style="left:574px;top:384px;width:1px;height:26px;background:#a8a8a8"></div>
<div class="r" style="left:674px;top:384px;width:1px;height:26px;background:#a8a8a8"></div>
<div class="r" style="left:740px;top:384px;width:1px;height:26px;background:#a8a8a8"></div>
<div class="r" style="left:825px;top:384px;width:1px;height:26px;background:#a8a8a8"></div>
<div class="r" style="left:914px;top:384px;width:1px;height:26px;background:#a8a8a8"></div>
<div class="r" style="left:991px;top:384px;width:1px;height:26px;background:#a8a8a8"></div>
<div class="r" style="left:1079px;top:384px;width:1px;height:26px;background:#a8a8a8"></div>
<div class="t" style="left:45px;top:393px;font-size:10px;line-height:10px;color:#111;letter-spacing:0.3px">012721</div>
<div class="t" style="left:116px;top:388px;font-size:10px;line-height:10px;color:#111;letter-spacing:-0.08px">INTERRUPTOR ELETRONICO SMART WIFI TOUCH</div>
<div class="t" style="left:116px;top:399px;font-size:10px;line-height:10px;color:#111;letter-spacing:-0.08px">BRANCO EWS 1004</div>
<div class="t" style="left:358px;top:393px;font-size:10px;line-height:10px;color:#111;letter-spacing:-0.1px">UN</div>
<div class="t" style="left:379px;width:100px;text-align:right;top:393px;font-size:10px;line-height:10px;color:#111;letter-spacing:-0.1px">4,00</div>
<div class="t" style="left:473px;width:100px;text-align:right;top:393px;font-size:10px;line-height:10px;color:#111;letter-spacing:-0.1px">97,14</div>
<div class="t" style="left:573px;width:100px;text-align:right;top:393px;font-size:10px;line-height:10px;color:#111;letter-spacing:-0.1px">388,56</div>
<div class="t" style="left:743px;top:393px;font-size:10px;line-height:10px;color:#111;letter-spacing:-0.1px">088</div>
<div class="t" style="left:813px;width:100px;text-align:right;top:393px;font-size:10px;line-height:10px;color:#111;letter-spacing:-0.1px">R$ 0,00</div>
<div class="t" style="left:890px;width:100px;text-align:right;top:393px;font-size:10px;line-height:10px;color:#111;letter-spacing:-0.1px">R$ 0,00</div>
<div class="t" style="left:978px;width:100px;text-align:right;top:393px;font-size:10px;line-height:10px;color:#111;letter-spacing:-0.1px">1</div>
<div class="r" style="left:44px;top:411px;width:1181px;height:29px;background:#d9e9f6"></div>
<div class="r" style="left:33px;top:411px;width:11px;height:29px;background:#a4c4ec"></div>
<div class="r" style="left:33px;top:439px;width:11px;height:1px;background:#1a2a40"></div>
<div class="r" style="left:44px;top:439px;width:1181px;height:1px;background:#a8a8a8"></div>
<div class="r" style="left:33px;top:411px;width:1px;height:29px;background:#1a2a40"></div>
<div class="r" style="left:43px;top:411px;width:1px;height:29px;background:#1a2a40"></div>
<div class="r" style="left:113px;top:411px;width:1px;height:28px;background:#a8a8a8"></div>
<div class="r" style="left:355px;top:411px;width:1px;height:28px;background:#a8a8a8"></div>
<div class="r" style="left:401px;top:411px;width:1px;height:28px;background:#a8a8a8"></div>
<div class="r" style="left:480px;top:411px;width:1px;height:28px;background:#a8a8a8"></div>
<div class="r" style="left:574px;top:411px;width:1px;height:28px;background:#a8a8a8"></div>
<div class="r" style="left:674px;top:411px;width:1px;height:28px;background:#a8a8a8"></div>
<div class="r" style="left:740px;top:411px;width:1px;height:28px;background:#a8a8a8"></div>
<div class="r" style="left:825px;top:411px;width:1px;height:28px;background:#a8a8a8"></div>
<div class="r" style="left:914px;top:411px;width:1px;height:28px;background:#a8a8a8"></div>
<div class="r" style="left:991px;top:411px;width:1px;height:28px;background:#a8a8a8"></div>
<div class="r" style="left:1079px;top:411px;width:1px;height:28px;background:#a8a8a8"></div>
<div class="t" style="left:45px;top:421px;font-size:10px;line-height:10px;color:#111;letter-spacing:0.3px">011326</div>
<div class="t" style="left:116px;top:416px;font-size:10px;line-height:10px;color:#111;letter-spacing:-0.08px">ROTEADOR ACCESS POINT CORPORATIVO AP</div>
<div class="t" style="left:116px;top:427px;font-size:10px;line-height:10px;color:#111;letter-spacing:-0.08px">1250 AC OUTDOOR</div>
<div class="t" style="left:358px;top:421px;font-size:10px;line-height:10px;color:#111;letter-spacing:-0.1px">UN</div>
<div class="t" style="left:379px;width:100px;text-align:right;top:421px;font-size:10px;line-height:10px;color:#111;letter-spacing:-0.1px">1,00</div>
<div class="t" style="left:473px;width:100px;text-align:right;top:421px;font-size:10px;line-height:10px;color:#111;letter-spacing:-0.1px">461,022</div>
<div class="t" style="left:573px;width:100px;text-align:right;top:421px;font-size:10px;line-height:10px;color:#111;letter-spacing:-0.1px">461,02</div>
<div class="t" style="left:743px;top:421px;font-size:10px;line-height:10px;color:#111;letter-spacing:-0.1px">294</div>
<div class="t" style="left:978px;width:100px;text-align:right;top:421px;font-size:10px;line-height:10px;color:#111;letter-spacing:-0.1px">1</div>
<svg class="r" style="left:37px;top:349px" width="5" height="9"><path d="M0 0 L5 4.5 L0 9Z" fill="#000"/></svg>
<svg class="r" style="left:15px;top:294px" width="14" height="14"><circle cx="7" cy="7" r="6.5" fill="#1e9e3e"/><path d="M7 3 V11 M3 7 H11" stroke="#fff" stroke-width="2.4"/></svg>
<svg class="r" style="left:15px;top:314px" width="14" height="13"><rect x="0.5" y="0.5" width="10" height="11" fill="#f4f4f4" stroke="#dde" stroke-width="0.5"/><rect x="0" y="0" width="11" height="1.2" fill="#3060c0"/><path d="M2.5 4 H7 M2.5 6.5 H7 M2.5 9 H5.5" stroke="#2060d0" stroke-width="1.3"/><path d="M6 12 L12.5 5.5" stroke="#f0a020" stroke-width="2"/><path d="M12 5 L13.5 3.8" stroke="#e03030" stroke-width="1.6"/></svg>
<svg class="r" style="left:15px;top:336px" width="14" height="13"><path d="M0.5 0.5 H13.5 L11.5 12.5 H2.5Z" fill="#c8d4dc" stroke="#8c969c" stroke-width="0.8"/><rect x="0" y="0" width="14" height="2.2" fill="#8a9096"/><path d="M3 4 L10.5 11 M11 4 L3.5 11 M7 3 V12" stroke="#f2f6f8" stroke-width="0.8"/></svg>
<svg class="r" style="left:15px;top:354px" width="14" height="13"><rect x="0.5" y="0.5" width="10" height="11" fill="#f4f4f4" stroke="#dde" stroke-width="0.5"/><rect x="0" y="0" width="11" height="1.2" fill="#3060c0"/><path d="M2.5 4 H7 M2.5 6.5 H7 M2.5 9 H5.5" stroke="#2060d0" stroke-width="1.3"/><path d="M6 12 L12.5 5.5" stroke="#f0a020" stroke-width="2"/><path d="M12 5 L13.5 3.8" stroke="#e03030" stroke-width="1.6"/></svg>
<svg class="r" style="left:15px;top:374px" width="14" height="14"><circle cx="7" cy="7" r="6.5" fill="#1e90e8"/><rect x="5.9" y="5.8" width="2.3" height="5.5" fill="#fff"/><circle cx="7" cy="3.6" r="1.3" fill="#fff"/></svg>
<svg class="r" style="left:16px;top:393px" width="13" height="14"><path d="M0.5 0.5 H7.5 L10.5 3.5 V13 H0.5Z" fill="#fff" stroke="#333" stroke-width="0.8"/><circle cx="10" cy="11" r="2.5" fill="#5ab4f0"/><path d="M10 9.5 V12.5 M8.5 11 H11.5" stroke="#fff" stroke-width="0.8"/></svg>
<svg class="r" style="left:15px;top:414px" width="14" height="12"><rect x="0" y="0.5" width="14" height="10" fill="#e84a2a"/><path d="M1.5 1 H6.8 V9.5 H1.5Z M7.2 1 H12.5 V9.5 H7.2Z" fill="#f2efe8"/><rect x="6" y="10" width="2" height="2" fill="#222"/></svg>
<div class="r" style="left:17px;top:434px;width:10px;height:13px;background:#8cc4f4"></div>
<div class="r" style="left:15px;top:445px;width:10px;height:2px;background:#2a8ae8"></div>
<div class="r" style="left:33px;top:440px;width:1192px;height:7px;background:#a6c4ea"></div>
<div class="r" style="left:0px;top:447px;width:1238px;height:1px;background:#000"></div>
</div>
<div class="r" style="left:0px;top:448px;width:1px;height:217px;background:#000"></div>
<div class="r" style="left:1236px;top:0px;width:2px;height:665px;background:#000"></div>
<div class="r" style="left:0px;top:664px;width:1238px;height:1px;background:#000"></div>
<div class="r" style="left:207px;top:474px;width:771px;height:184px;overflow:hidden">
<div class="r" style="left:-1px;top:-2px;width:1238px;height:448px">
<div class="r" style="left:0px;top:0px;width:1238px;height:448px;background:#b9d1ea"></div>
<div class="r" style="left:0px;top:0px;width:1238px;height:1px;background:#000"></div>
<div class="r" style="left:0px;top:1px;width:1238px;height:2px;background:linear-gradient(#f4f4f4,#d8d8d8)"></div>
<div class="r" style="left:0px;top:3px;width:1238px;height:2px;background:linear-gradient(#a8a8a8,#808080)"></div>
<div class="r" style="left:0px;top:5px;width:1238px;height:1px;background:#303030"></div>
<div class="r" style="left:0px;top:6px;width:1238px;height:1px;background:#dfe8f2"></div>
<div class="r" style="left:3px;top:7px;width:1232px;height:26px;background:linear-gradient(#97b1d2,#b8d0ea)"></div>
<div class="r" style="left:0px;top:0px;width:2px;height:448px;background:#000"></div>
<div class="r" style="left:2px;top:0px;width:1px;height:448px;background:#404040"></div>
<div class="r" style="left:3px;top:6px;width:1px;height:442px;background:#f4f8fc"></div>
<div class="r" style="left:9px;top:33px;width:2px;height:415px;background:#f4f4f4"></div>
<div class="r" style="left:1228px;top:33px;width:6px;height:415px;background:#bcd3ee"></div>
<div class="r" style="left:1233px;top:6px;width:1px;height:442px;background:#8ee4f8"></div>
<div class="r" style="left:1234px;top:6px;width:1px;height:442px;background:#0d3a48"></div>
<div class="r" style="left:1235px;top:6px;width:1px;height:442px;background:#a09a98"></div>
<div class="r" style="left:1236px;top:0px;width:2px;height:448px;background:#000"></div>
<div class="r" style="left:1197px;top:14px;width:29px;height:17px;border:1px solid #5a2630;border-radius:3px;box-sizing:border-box;background:linear-gradient(#f0b4a8 0%,#e2907e 42%,#c8401c 50%,#d0603e 75%,#dc8874 100%);box-shadow:inset 0 0 0 1px rgba(255,220,210,0.6)"></div>
<svg class="r" style="left:1197px;top:14px" width="29" height="17"><path d="M10.5 5 L18.5 12 M18.5 5 L10.5 12" stroke="#3a4a5a" stroke-width="3.6"/><path d="M10.5 5 L18.5 12 M18.5 5 L10.5 12" stroke="#fff" stroke-width="2.2"/></svg>
<svg class="r" style="left:11px;top:15px" width="15" height="15"><rect x="0" y="0" width="15" height="15" fill="#0b2a4e"/><path d="M2 5 Q4 2 7 3" stroke="#7ed321" stroke-width="2" fill="none"/><path d="M5 6 L8 4" stroke="#2a8cff" stroke-width="2"/><rect x="2" y="9" width="2" height="3" fill="#fff"/><rect x="6" y="7" width="2" height="5" fill="#fff"/><rect x="10" y="5" width="2" height="7" fill="#fff"/><rect x="1" y="12" width="13" height="2" fill="#fff"/></svg>
<div class="t" style="left:29px;top:18px;font-size:11px;line-height:11px;color:#1a1020;letter-spacing:-0.15px">Movimento de Transferência de Itens</div>
<div class="r" style="left:9px;top:33px;width:1219px;height:33px;background:linear-gradient(#c4f2fc 0%,#a8dcf2 18%,#7fb6e2 50%,#5894d6 75%,#3e79c8 92%,#245fb8 100%)"></div>
<div class="r" style="left:9px;top:65px;width:1219px;height:1px;background:#1f5ab0"></div>
<div class="r" style="left:263px;top:33px;width:64px;height:33px;background:linear-gradient(#d4dcf4,#c3ccee);border:1px solid #7f9bdc;box-sizing:border-box"></div>
<div class="r" style="left:328px;top:33px;width:12px;height:33px;background:linear-gradient(#d4dcf4,#c3ccee);border:1px solid #7f9bdc;box-sizing:border-box"></div>
<div class="t" style="left:17px;top:53px;font-size:11px;line-height:11px;font-weight:bold;color:#fff;text-shadow:0 0 1px #2a5a9a;letter-spacing:0.2px">Retornar</div>
<div class="t" style="left:87px;top:53px;font-size:11px;line-height:11px;font-weight:bold;color:#fff;text-shadow:0 0 1px #2a5a9a;letter-spacing:0.1px">Incluir</div>
<div class="t" style="left:149px;top:53px;font-size:11px;line-height:11px;font-weight:bold;color:#fff;text-shadow:0 0 1px #2a5a9a;letter-spacing:-0.35px">Excluir</div>
<div class="t" style="left:205px;top:53px;font-size:11px;line-height:11px;font-weight:bold;color:#fff;text-shadow:0 0 1px #2a5a9a;letter-spacing:-0.22px">Gerar N.F.</div>
<div class="t" style="left:271px;top:53px;font-size:11px;line-height:11px;font-weight:bold;color:#fff;text-shadow:0 0 1px #2a5a9a;letter-spacing:0.34px">Imprimir</div>
<div class="t" style="left:345px;top:53px;font-size:11px;line-height:11px;font-weight:bold;color:#fff;text-shadow:0 0 1px #2a5a9a;letter-spacing:-0.42px">Processos</div>
<div class="t" style="left:423px;top:53px;font-size:11px;line-height:11px;font-weight:bold;color:#fff;text-shadow:0 0 1px #2a5a9a;letter-spacing:-0.3px">Conferido</div>
<div class="t" style="left:507px;top:53px;font-size:11px;line-height:11px;font-weight:bold;color:#6c6c6c;text-shadow:0 0 1px #9ab;letter-spacing:0.1px">Salvar</div>
<div class="t" style="left:564px;top:53px;font-size:11px;line-height:11px;font-weight:bold;color:#6c6c6c;text-shadow:0 0 1px #9ab;letter-spacing:-0.26px">Cancelar</div>
<div class="r" style="left:88px;top:63px;width:3px;height:1px;background:#b8cce6"></div>
<div class="r" style="left:150px;top:63px;width:7px;height:1px;background:#b8cce6"></div>
<div class="r" style="left:206px;top:63px;width:8px;height:1px;background:#b8cce6"></div>
<div class="r" style="left:300px;top:63px;width:3px;height:1px;background:#b8cce6"></div>
<div class="r" style="left:346px;top:63px;width:7px;height:1px;background:#b8cce6"></div>
<div class="r" style="left:508px;top:63px;width:7px;height:1px;background:#b8cce6"></div>
<svg class="r" style="left:331px;top:53px" width="7" height="4"><path d="M0 0 L7 0 L3.5 4Z" fill="#fff"/></svg>
<svg class="r" style="left:408px;top:53px" width="7" height="4"><path d="M0 0 L7 0 L3.5 4Z" fill="#fff"/></svg>
<svg class="r" style="left:34px;top:39px" width="14" height="12"><path d="M0.3 3.2 L3.6 0.4 V6.2Z" fill="#0a55c8"/><path d="M3 3 H9.6 A2.7 2.9 0 0 1 9.6 8.8 H9" stroke="#0a55c8" stroke-width="2.1" fill="none"/><path d="M1.5 8 V10.8 M3.5 8 V10.8 M5.5 8 V10.8 M7.5 8 V10.8" stroke="#0a55c8" stroke-width="1"/></svg>
<svg class="r" style="left:97px;top:37px" width="15" height="15"><circle cx="7.5" cy="7.5" r="6.8" fill="#1e9e3e" stroke="#4a4a4a" stroke-width="0.4" stroke-dasharray="1 3"/><path d="M7.5 3.5 V11.5 M3.5 7.5 H11.5" stroke="#fff" stroke-width="2.4"/></svg>
<svg class="r" style="left:161px;top:39px" width="13" height="13"><path d="M0.5 1 H12.5 L10.8 12.5 H2.2Z" fill="#a4b4be"/><path d="M1.8 4.5 H11.2 M2.2 7.5 H10.8 M2.6 10.5 H10.4 M4 2.5 L4.8 12 M6.5 2.5 V12 M9 2.5 L8.2 12" stroke="#5a4a42" stroke-width="0.8"/><path d="M1 1.5 L2.6 12 H10.4 L12 1.5" fill="none" stroke="#4a3e38" stroke-width="1"/><rect x="0" y="0.5" width="13" height="2" fill="#4a3e38"/></svg>
<svg class="r" style="left:225px;top:39px" width="13" height="11"><path d="M6.5 0.6 L8 2 L10.4 1.8 L10.6 4.2 L12.3 5.5 L10.6 6.8 L10.4 9.2 L8 9 L6.5 10.4 L5 9 L2.6 9.2 L2.4 6.8 L0.7 5.5 L2.4 4.2 L2.6 1.8 L5 2Z" fill="#fff" stroke="#2d86dc" stroke-width="1.2" stroke-dasharray="2.2 1"/><rect x="4.8" y="3.6" width="3.6" height="3.4" fill="#a8d0f0"/><rect x="4.8" y="6.2" width="3.6" height="0.9" fill="#2d86dc"/></svg>
<svg class="r" style="left:288px;top:39px" width="14" height="12"><rect x="3" y="0" width="7" height="3.5" fill="#34e6fc"/><rect x="2" y="0.8" width="1.3" height="2.6" fill="#1060d0"/><rect x="9.7" y="0.8" width="1.3" height="2.6" fill="#1060d0"/><rect x="0" y="3.2" width="13" height="6.2" fill="#6a6e74"/><rect x="3" y="7.5" width="7" height="4" fill="#34e6fc"/><rect x="0" y="8.6" width="3" height="1.6" fill="#3a3a3a"/><rect x="10" y="8.6" width="3" height="1.6" fill="#3a3a3a"/><rect x="10.2" y="4.5" width="1.3" height="1.6" fill="#40b8f0"/></svg>
<svg class="r" style="left:367px;top:38px" width="13" height="14"><path d="M0 0 H7 L9.5 2.5 V13 H0Z" fill="#8fc6f6"/><path d="M7 0 V2.5 H9.5Z" fill="#eef6ff"/><path d="M2 6 H6.8 M2 9.3 H5.5" stroke="#0a50c0" stroke-width="1.4"/><circle cx="8.5" cy="10" r="2.7" fill="none" stroke="#4a5258" stroke-width="1.8" stroke-dasharray="1.3 0.6"/></svg>
<svg class="r" style="left:442px;top:38px" width="14" height="14"><defs><linearGradient id="cbg" x1="0" y1="0" x2="0" y2="1"><stop offset="0" stop-color="#fafafa"/><stop offset="1" stop-color="#d4d8dc"/></linearGradient></defs><rect x="0.5" y="0.5" width="13" height="13" fill="url(#cbg)" stroke="#2d4f86"/><path d="M2.8 6.8 L5.8 9.8 L11 3.8" stroke="#3c9a18" stroke-width="2.3" fill="none"/></svg>
<svg class="r" style="left:518px;top:39px" width="14" height="12"><path d="M2.5 6.5 L5.5 10 L12 2" stroke="#f4f8fc" stroke-width="2.6" fill="none" transform="translate(0.8,0.8)"/><path d="M1.5 5.5 L5 9 L12 1.5" stroke="#8e969c" stroke-width="2.8" fill="none"/></svg>
<svg class="r" style="left:582px;top:38px" width="14" height="13"><path d="M2.5 2.5 L11.5 11.5 M11.5 2.5 L2.5 11.5" stroke="#f4f8fc" stroke-width="3" fill="none" transform="translate(0.8,0.8)"/><path d="M2 2 L11 11 M11 2 L2 11" stroke="#8e969c" stroke-width="3.2" fill="none"/></svg>
<div class="r" style="left:9px;top:66px;width:1219px;height:43px;background:#fafafa"></div>
<div class="r" style="left:9px;top:109px;width:1219px;height:1px;background:#a0a0a0"></div>
<div class="t" style="left:14px;top:71px;font-size:11px;line-height:11px;color:#1a1020;">Nro Documento</div>
<div class="t" style="left:101px;top:71px;font-size:11px;line-height:11px;color:#1a1020;letter-spacing:-0.45px">Data Emissão</div>
<div class="r" style="left:16px;top:87px;width:81px;height:15px;background:#efefef"></div>
<div class="t" style="left:17px;top:89px;font-size:11px;line-height:11px;font-weight:bold;letter-spacing:0.2px">0000009014</div>
<div class="r" style="left:100px;top:86px;width:89px;height:17px;background:#fff;border:1px solid #a9a9a9;box-sizing:border-box"></div>
<div class="t" style="left:101px;top:89px;font-size:10.5px;line-height:10.5px;color:#111;letter-spacing:0.2px">09/07/2025</div>
<div class="r" style="left:174px;top:87px;width:14px;height:15px;background:#f0f0f0"></div>
<svg class="r" style="left:177px;top:92px" width="8" height="5"><path d="M0 0 H8 L4 4.5Z" fill="#000"/></svg>
<div class="t" style="left:209px;top:70px;font-size:11px;line-height:11px;color:#1a1020;letter-spacing:-0.18px">Número da Nota Fiscal</div>
<div class="t" style="left:228px;top:87px;font-size:14px;line-height:14px;font-weight:bold;letter-spacing:1.2px">0000146548</div>
<div class="r" style="left:323px;top:83px;width:21px;height:20px;background:#f6f276;border:2px solid #4a4a30;box-sizing:border-box"></div>
<div class="r" style="left:326px;top:86px;width:15px;height:14px;border:1px dotted #222;box-sizing:border-box"></div>
<div class="r" style="left:329px;top:87px;width:9px;height:13px;background:#f5501a"></div>
<div class="r" style="left:335px;top:87px;width:3px;height:3px;background:#ffc090"></div>
<div class="r" style="left:330px;top:93px;width:7px;height:2px;background:#ffb080"></div>
<div class="t" style="left:354px;top:71px;font-size:11px;line-height:11px;color:#1a1020;letter-spacing:0.1px">Valor Total do Movimento</div>
<div class="t" style="left:481px;top:71px;font-size:11px;line-height:11px;color:#1a1020;letter-spacing:-0.15px">Situação</div>
<div class="t" style="left:410px;top:88px;font-size:14px;line-height:14px;font-weight:bold;letter-spacing:1px">1.540,53</div>
<div class="t" style="left:487px;top:88px;font-size:14px;line-height:14px;font-weight:bold;color:#128a12;">Liberado</div>
<div class="r" style="left:633px;top:72px;width:116px;height:32px;background:#e1e1e1;border:1px solid #adadad;box-sizing:border-box"></div>
<div class="r" style="left:737px;top:73px;width:1px;height:30px;background:#adadad"></div>
<svg class="r" style="left:739px;top:86px" width="8" height="5"><path d="M0 0 H8 L4 4.5Z" fill="#000"/></svg>
<svg class="r" style="left:658px;top:83px" width="13" height="10"><rect x="0" y="0" width="2" height="2" fill="#e03030"/><rect x="0" y="4" width="2" height="2" fill="#e03030"/><rect x="0" y="8" width="2" height="2" fill="#3fa9f5"/><rect x="4" y="0" width="9" height="2" fill="#1f55c0"/><rect x="4" y="4" width="9" height="2" fill="#1f55c0"/><rect x="4" y="8" width="9" height="2" fill="#1f55c0"/></svg>
<div class="t" style="left:676px;top:84px;font-size:10px;line-height:10px;letter-spacing:-0.1px">Situação</div>
<div class="r" style="left:676px;top:94px;width:6px;height:1px;background:#000"></div>
<div class="r" style="left:11px;top:110px;width:1217px;height:337px;background:#f0f0f0"></div>
<div class="r" style="left:9px;top:110px;width:2px;height:337px;background:#f8f8f8"></div>
<div class="r" style="left:117px;top:110px;width:1px;height:18px;background:#c4c4c4"></div>
<div class="r" style="left:118px;top:110px;width:1px;height:18px;background:#fff"></div>
<div class="t" style="left:17px;top:114px;font-size:10px;line-height:10px;color:#111;letter-spacing:-0.15px">Dados do Documento</div>
<div class="r" style="left:11px;top:129px;width:1217px;height:1px;background:#c8c8c8"></div>
<div class="r" style="left:11px;top:129px;width:1px;height:161px;background:#a8a8a8"></div>
<div class="r" style="left:12px;top:130px;width:1px;height:159px;background:#e0e0e0"></div>
<div class="r" style="left:1226px;top:110px;width:2px;height:180px;background:#9a968e"></div>
<div class="r" style="left:1224px;top:129px;width:1px;height:161px;background:#e8e8e8"></div>
<div class="r" style="left:1225px;top:129px;width:1px;height:161px;background:#b4b4b4"></div>
<div class="r" style="left:13px;top:131px;width:473px;height:1px;background:#a0a0a0"></div>
<div class="r" style="left:13px;top:131px;width:1px;height:157px;background:#a0a0a0"></div>
<div class="r" style="left:14px;top:132px;width:472px;height:1px;background:#fff"></div>
<div class="r" style="left:14px;top:132px;width:1px;height:156px;background:#fff"></div>
<div class="r" style="left:486px;top:130px;width:1px;height:160px;background:#a0a0a0"></div>
<div class="r" style="left:487px;top:130px;width:1px;height:160px;background:#d0d0d0"></div>
<div class="r" style="left:11px;top:288px;width:476px;height:1px;background:#fff"></div>
<div class="r" style="left:11px;top:289px;width:1217px;height:1px;background:#c8c8c8"></div>
<div class="r" style="left:11px;top:290px;width:1217px;height:1px;background:#a0a0a0"></div>
<div class="t" style="left:22px;top:136px;font-size:10px;line-height:10px;color:#111;letter-spacing:-0.1px">Modo de Transferência</div>
<div class="r" style="left:20px;top:148px;width:45px;height:18px;background:#fff;border:1px solid #a6a6a6;box-sizing:border-box"></div>
<div class="t" style="left:21px;top:152px;font-size:10px;line-height:10px;color:#1a1030;letter-spacing:0.1px">00102</div>
<div class="r" style="left:72px;top:148px;width:18px;height:18px;background:#dedede;border:1px solid #cacaca;box-sizing:border-box"></div>
<svg class="r" style="left:74px;top:150px" width="14" height="14"><circle cx="6" cy="6" r="4.3" fill="#d6e2e6" stroke="#6a7378" stroke-width="1.1"/><path d="M9.2 9.2 L12.8 12.8" stroke="#3c4a55" stroke-width="1.4"/></svg>
<div class="r" style="left:97px;top:148px;width:361px;height:18px;background:#fff;border:1px solid #a6a6a6;box-sizing:border-box"></div>
<div class="t" style="left:98px;top:153px;font-size:10px;line-height:10px;color:#111;letter-spacing:-0.07px">DG MATRIZ GUARAPUAVA PARA DG FILIAL PONTA GROSSA</div>
<div class="r" style="left:442px;top:149px;width:15px;height:16px;background:#f0f0f0"></div>
<svg class="r" style="left:446px;top:155px" width="8" height="5"><path d="M0 0 H8 L4 4.5Z" fill="#000"/></svg>
<div class="r" style="left:463px;top:147px;width:18px;height:19px;background:#dedede;border:1px solid #c4c4c4;box-sizing:border-box"></div>
<svg class="r" style="left:465px;top:149px" width="15" height="15"><circle cx="7.5" cy="7.5" r="6.6" fill="#1e90e8"/><rect x="6.4" y="6.2" width="2.4" height="5.6" fill="#fff"/><circle cx="7.6" cy="4.1" r="1.3" fill="#fff"/></svg>
<div class="r" style="left:15px;top:170px;width:471px;height:1px;background:#a0a0a0"></div>
<div class="r" style="left:15px;top:171px;width:471px;height:1px;background:#fff"></div>
<div class="t" style="left:22px;top:175px;font-size:10px;line-height:10px;color:#111;letter-spacing:-0.1px">Cliente/Fornecedor</div>
<div class="r" style="left:20px;top:187px;width:45px;height:18px;background:#fff;border:1px solid #a6a6a6;box-sizing:border-box"></div>
<div class="t" style="left:21px;top:191px;font-size:10px;line-height:10px;color:#1a1030;letter-spacing:0.1px">0013173</div>
<div class="r" style="left:72px;top:187px;width:18px;height:18px;background:#dedede;border:1px solid #cacaca;box-sizing:border-box"></div>
<svg class="r" style="left:74px;top:189px" width="14" height="14"><circle cx="6" cy="6" r="4.3" fill="#d6e2e6" stroke="#6a7378" stroke-width="1.1"/><path d="M9.2 9.2 L12.8 12.8" stroke="#3c4a55" stroke-width="1.4"/></svg>
<div class="r" style="left:97px;top:187px;width:361px;height:18px;background:#fff;border:1px solid #a6a6a6;box-sizing:border-box"></div>
<div class="t" style="left:98px;top:192px;font-size:10px;line-height:10px;color:#111;letter-spacing:-0.07px">DISTRIBUIDORA GUARAPUAVA LTDA - FILIAL PONTA GROSSA</div>
<div class="r" style="left:442px;top:188px;width:15px;height:16px;background:#f0f0f0"></div>
<svg class="r" style="left:446px;top:194px" width="8" height="5"><path d="M0 0 H8 L4 4.5Z" fill="#000"/></svg>
<div class="r" style="left:15px;top:209px;width:471px;height:1px;background:#a0a0a0"></div>
<div class="r" style="left:15px;top:210px;width:471px;height:1px;background:#fff"></div>
<div class="t" style="left:22px;top:214px;font-size:10px;line-height:10px;color:#111;letter-spacing:-0.1px">Vendedor</div>
<div class="r" style="left:20px;top:226px;width:45px;height:18px;background:#fff;border:1px solid #a6a6a6;box-sizing:border-box"></div>
<div class="t" style="left:21px;top:230px;font-size:10px;line-height:10px;color:#1a1030;letter-spacing:0.1px">00019</div>
<div class="r" style="left:72px;top:226px;width:18px;height:18px;background:#dedede;border:1px solid #cacaca;box-sizing:border-box"></div>
<svg class="r" style="left:74px;top:228px" width="14" height="14"><circle cx="6" cy="6" r="4.3" fill="#d6e2e6" stroke="#6a7378" stroke-width="1.1"/><path d="M9.2 9.2 L12.8 12.8" stroke="#3c4a55" stroke-width="1.4"/></svg>
<div class="r" style="left:97px;top:226px;width:361px;height:18px;background:#fff;border:1px solid #a6a6a6;box-sizing:border-box"></div>
<div class="t" style="left:98px;top:231px;font-size:10px;line-height:10px;color:#111;letter-spacing:-0.07px">SEM VENDEDOR</div>
<div class="r" style="left:442px;top:227px;width:15px;height:16px;background:#f0f0f0"></div>
<svg class="r" style="left:446px;top:233px" width="8" height="5"><path d="M0 0 H8 L4 4.5Z" fill="#000"/></svg>
<div class="r" style="left:15px;top:248px;width:471px;height:1px;background:#a0a0a0"></div>
<div class="r" style="left:15px;top:249px;width:471px;height:1px;background:#fff"></div>
<div class="t" style="left:22px;top:253px;font-size:10px;line-height:10px;color:#111;letter-spacing:-0.1px">Condição de Pagamento</div>
<div class="r" style="left:20px;top:265px;width:27px;height:18px;background:#fff;border:1px solid #a6a6a6;box-sizing:border-box"></div>
<div class="t" style="left:21px;top:269px;font-size:10px;line-height:10px;color:#1a1030;letter-spacing:0.1px">0001</div>
<div class="r" style="left:72px;top:265px;width:18px;height:18px;background:#dedede;border:1px solid #cacaca;box-sizing:border-box"></div>
<svg class="r" style="left:74px;top:267px" width="14" height="14"><circle cx="6" cy="6" r="4.3" fill="#d6e2e6" stroke="#6a7378" stroke-width="1.1"/><path d="M9.2 9.2 L12.8 12.8" stroke="#3c4a55" stroke-width="1.4"/></svg>
<div class="r" style="left:97px;top:265px;width:361px;height:18px;background:#fff;border:1px solid #a6a6a6;box-sizing:border-box"></div>
<div class="t" style="left:98px;top:270px;font-size:10px;line-height:10px;color:#111;letter-spacing:-0.07px">A VISTA</div>
<div class="r" style="left:442px;top:266px;width:15px;height:16px;background:#f0f0f0"></div>
<svg class="r" style="left:446px;top:272px" width="8" height="5"><path d="M0 0 H8 L4 4.5Z" fill="#000"/></svg>
<div class="r" style="left:488px;top:130px;width:737px;height:159px;background:#fff"></div>
<div class="r" style="left:488px;top:151px;width:735px;height:1px;background:#000"></div>
<div class="r" style="left:492px;top:134px;width:63px;height:18px;background:#f0f0f0;border:1px solid #000;border-bottom:none;box-sizing:border-box"></div>
<div class="r" style="left:488px;top:152px;width:735px;height:3px;background:#f0f0f0"></div>
<div class="t" style="left:497px;top:140px;font-size:10px;line-height:10px;color:#111;letter-spacing:-0.15px">Observação</div>
<div class="t" style="left:558px;top:140px;font-size:10px;line-height:10px;color:#111;letter-spacing:-0.15px">Observação Interna</div>
<div class="r" style="left:489px;top:155px;width:734px;height:132px;background:#fff;border:1px solid #a0a0a0;border-right-color:#d8d8d8;border-bottom-color:#b4b4b4;box-sizing:border-box"></div>
<div class="r" style="left:11px;top:291px;width:1214px;height:156px;background:#a6c6ec"></div>
<div class="r" style="left:11px;top:291px;width:22px;height:156px;background:linear-gradient(#c8eef9 0%,#a6d4ef 30%,#7fb1e0 65%,#5f98d4 100%)"></div>
<div class="r" style="left:33px;top:291px;width:1192px;height:32px;background:#003f80"></div>
<div class="t" style="left:40px;top:303px;font-size:10px;line-height:10px;color:#fff;letter-spacing:-0.15px">Arraste um título de coluna aqui para criar um grupo</div>
<div class="r" style="left:1225px;top:291px;width:1px;height:156px;background:#e6e6e6"></div>
<div class="r" style="left:1226px;top:291px;width:2px;height:156px;background:#a0a0a0"></div>
<div class="r" style="left:33px;top:322px;width:1192px;height:18px;background:#0c2750"></div>
<div class="r" style="left:34px;top:323px;width:10px;height:16px;background:#3168c4"></div>
<div class="r" style="left:45px;top:323px;width:68px;height:16px;background:#3168c4"></div>
<div class="r" style="left:114px;top:323px;width:241px;height:16px;background:#3168c4"></div>
<div class="r" style="left:356px;top:323px;width:45px;height:16px;background:#3168c4"></div>
<div class="r" style="left:402px;top:323px;width:78px;height:16px;background:#3168c4"></div>
<div class="r" style="left:481px;top:323px;width:93px;height:16px;background:#3168c4"></div>
<div class="r" style="left:575px;top:323px;width:99px;height:16px;background:#3168c4"></div>
<div class="r" style="left:675px;top:323px;width:65px;height:16px;background:#3168c4"></div>
<div class="r" style="left:741px;top:323px;width:84px;height:16px;background:#3168c4"></div>
<div class="r" style="left:826px;top:323px;width:88px;height:16px;background:#3168c4"></div>
<div class="r" style="left:915px;top:323px;width:76px;height:16px;background:#3168c4"></div>
<div class="r" style="left:992px;top:323px;width:87px;height:16px;background:#3168c4"></div>
<div class="r" style="left:1080px;top:323px;width:145px;height:16px;background:#3168c4"></div>
<svg class="r" style="left:35px;top:326px" width="8" height="11"><path d="M1 1.5h1M1 4h1M1 6.5h1M1 9h1" stroke="#e8f0ff" stroke-width="1"/><path d="M3 1.5h4M3 4h4M3 6.5h4M3 9h4" stroke="#c8d8f0" stroke-width="1.2"/></svg>
<div class="t" style="left:47px;top:327px;font-size:10.5px;line-height:10.5px;font-weight:bold;color:#fff;letter-spacing:0.1px">Reduzido</div>
<div class="t" style="left:116px;top:327px;font-size:10.5px;line-height:10.5px;font-weight:bold;color:#fff;letter-spacing:0.1px">Descrição</div>
<div class="t" style="left:358px;top:327px;font-size:10.5px;line-height:10.5px;font-weight:bold;color:#fff;letter-spacing:0.1px">Und.</div>
<div class="t" style="left:358px;width:120px;text-align:right;top:327px;font-size:10.5px;line-height:10.5px;font-weight:bold;color:#fff;letter-spacing:0.1px">Quantidade</div>
<div class="t" style="left:452px;width:120px;text-align:right;top:327px;font-size:10.5px;line-height:10.5px;font-weight:bold;color:#fff;letter-spacing:0.1px">$ Unitário</div>
<div class="t" style="left:552px;width:120px;text-align:right;top:327px;font-size:10.5px;line-height:10.5px;font-weight:bold;color:#fff;letter-spacing:0.1px">$ Total</div>
<div class="t" style="left:677px;top:327px;font-size:10.5px;line-height:10.5px;font-weight:bold;color:#fff;letter-spacing:0.1px">No. Lote</div>
<div class="t" style="left:743px;top:327px;font-size:10.5px;line-height:10.5px;font-weight:bold;color:#fff;letter-spacing:0.1px">Grupo Fiscal</div>
<div class="t" style="left:792px;width:120px;text-align:right;top:327px;font-size:10.5px;line-height:10.5px;font-weight:bold;color:#fff;letter-spacing:0.1px">Peso Líquido</div>
<div class="t" style="left:869px;width:120px;text-align:right;top:327px;font-size:10.5px;line-height:10.5px;font-weight:bold;color:#fff;letter-spacing:0.1px">Peso Bruto</div>
<div class="t" style="left:957px;width:120px;text-align:right;top:327px;font-size:10.5px;line-height:10.5px;font-weight:bold;color:#fff;letter-spacing:0.1px">Índice</div>
<div class="r" style="left:1080px;top:323px;width:145px;height:16px;overflow:hidden"><div class="t" style="left:34px;top:4px;font-size:10.5px;line-height:10.5px;font-weight:bold;color:#fff;letter-spacing:0.1px">Quantidade a Movimentar</div></div>
<div class="r" style="left:44px;top:339px;width:1181px;height:28px;background:#d9e9f6"></div>
<div class="r" style="left:33px;top:339px;width:11px;height:28px;background:#a4c4ec"></div>
<div class="r" style="left:33px;top:366px;width:11px;height:1px;background:#1a2a40"></div>
<div class="r" style="left:44px;top:366px;width:1181px;height:1px;background:#a8a8a8"></div>
<div class="r" style="left:33px;top:339px;width:1px;height:28px;background:#1a2a40"></div>
<div class="r" style="left:43px;top:339px;width:1px;height:28px;background:#1a2a40"></div>
<div class="r" style="left:113px;top:339px;width:1px;height:27px;background:#a8a8a8"></div>
<div class="r" style="left:355px;top:339px;width:1px;height:27px;background:#a8a8a8"></div>
<div class="r" style="left:401px;top:339px;width:1px;height:27px;background:#a8a8a8"></div>
<div class="r" style="left:480px;top:339px;width:1px;height:27px;background:#a8a8a8"></div>
<div class="r" style="left:574px;top:339px;width:1px;height:27px;background:#a8a8a8"></div>
<div class="r" style="left:674px;top:339px;width:1px;height:27px;background:#a8a8a8"></div>
<div class="r" style="left:740px;top:339px;width:1px;height:27px;background:#a8a8a8"></div>
<div class="r" style="left:825px;top:339px;width:1px;height:27px;background:#a8a8a8"></div>
<div class="r" style="left:914px;top:339px;width:1px;height:27px;background:#a8a8a8"></div>
<div class="r" style="left:991px;top:339px;width:1px;height:27px;background:#a8a8a8"></div>
<div class="r" style="left:1079px;top:339px;width:1px;height:27px;background:#a8a8a8"></div>
<div class="t" style="left:45px;top:349px;font-size:10px;line-height:10px;color:#111;letter-spacing:0.3px">010794</div>
<div class="t" style="left:116px;top:344px;font-size:10px;line-height:10px;color:#111;letter-spacing:-0.08px">INTERRUPTOR SMART WI-FI TOUCH 3 EWS 1003</div>
<div class="t" style="left:116px;top:355px;font-size:10px;line-height:10px;color:#111;letter-spacing:-0.08px">BR</div>
<div class="t" style="left:358px;top:349px;font-size:10px;line-height:10px;color:#111;letter-spacing:-0.1px">PC</div>
<div class="t" style="left:379px;width:100px;text-align:right;top:349px;font-size:10px;line-height:10px;color:#111;letter-spacing:-0.1px">5,00</div>
<div class="t" style="left:473px;width:100px;text-align:right;top:349px;font-size:10px;line-height:10px;color:#111;letter-spacing:-0.1px">73,27</div>
<div class="t" style="left:573px;width:100px;text-align:right;top:349px;font-size:10px;line-height:10px;color:#111;letter-spacing:-0.1px">366,35</div>
<div class="t" style="left:743px;top:349px;font-size:10px;line-height:10px;color:#111;letter-spacing:-0.1px">088</div>
<div class="t" style="left:813px;width:100px;text-align:right;top:349px;font-size:10px;line-height:10px;color:#111;letter-spacing:-0.1px">R$ 0,00</div>
<div class="t" style="left:890px;width:100px;text-align:right;top:349px;font-size:10px;line-height:10px;color:#111;letter-spacing:-0.1px">R$ 0,00</div>
<div class="t" style="left:978px;width:100px;text-align:right;top:349px;font-size:10px;line-height:10px;color:#111;letter-spacing:-0.1px">1</div>
<div class="r" style="left:44px;top:367px;width:1181px;height:17px;background:#d9e9f6"></div>
<div class="r" style="left:33px;top:367px;width:11px;height:17px;background:#a4c4ec"></div>
<div class="r" style="left:33px;top:383px;width:11px;height:1px;background:#1a2a40"></div>
<div class="r" style="left:44px;top:383px;width:1181px;height:1px;background:#a8a8a8"></div>
<div class="r" style="left:33px;top:367px;width:1px;height:17px;background:#1a2a40"></div>
<div class="r" style="left:43px;top:367px;width:1px;height:17px;background:#1a2a40"></div>
<div class="r" style="left:113px;top:367px;width:1px;height:16px;background:#a8a8a8"></div>
<div class="r" style="left:355px;top:367px;width:1px;height:16px;background:#a8a8a8"></div>
<div class="r" style="left:401px;top:367px;width:1px;height:16px;background:#a8a8a8"></div>
<div class="r" style="left:480px;top:367px;width:1px;height:16px;background:#a8a8a8"></div>
<div class="r" style="left:574px;top:367px;width:1px;height:16px;background:#a8a8a8"></div>
<div class="r" style="left:674px;top:367px;width:1px;height:16px;background:#a8a8a8"></div>
<div class="r" style="left:740px;top:367px;width:1px;height:16px;background:#a8a8a8"></div>
<div class="r" style="left:825px;top:367px;width:1px;height:16px;background:#a8a8a8"></div>
<div class="r" style="left:914px;top:367px;width:1px;height:16px;background:#a8a8a8"></div>
<div class="r" style="left:991px;top:367px;width:1px;height:16px;background:#a8a8a8"></div>
<div class="r" style="left:1079px;top:367px;width:1px;height:16px;background:#a8a8a8"></div>
<div class="t" style="left:45px;top:371px;font-size:10px;line-height:10px;color:#111;letter-spacing:0.3px">000254</div>
<div class="t" style="left:116px;top:371px;font-size:10px;line-height:10px;color:#111;letter-spacing:-0.1px">RECEPTOR SULTON SRX102 433MHZ 1 RELE</div>
<div class="t" style="left:358px;top:371px;font-size:10px;line-height:10px;color:#111;letter-spacing:-0.1px">UN</div>
<div class="t" style="left:379px;width:100px;text-align:right;top:371px;font-size:10px;line-height:10px;color:#111;letter-spacing:-0.1px">10,00</div>
<div class="t" style="left:473px;width:100px;text-align:right;top:371px;font-size:10px;line-height:10px;color:#111;letter-spacing:-0.1px">32,46</div>
<div class="t" style="left:573px;width:100px;text-align:right;top:371px;font-size:10px;line-height:10px;color:#111;letter-spacing:-0.1px">324,60</div>
<div class="t" style="left:743px;top:371px;font-size:10px;line-height:10px;color:#111;letter-spacing:-0.1px">072</div>
<div class="t" style="left:813px;width:100px;text-align:right;top:371px;font-size:10px;line-height:10px;color:#111;letter-spacing:-0.1px">R$ 0,00</div>
<div class="t" style="left:890px;width:100px;text-align:right;top:371px;font-size:10px;line-height:10px;color:#111;letter-spacing:-0.1px">R$ 0,00</div>
<div class="t" style="left:978px;width:100px;text-align:right;top:371px;font-size:10px;line-height:10px;color:#111;letter-spacing:-0.1px">1</div>
<div class="r" style="left:44px;top:384px;width:1181px;height:27px;background:#d9e9f6"></div>
<div class="r" style="left:33px;top:384px;width:11px;height:27px;background:#a4c4ec"></div>
<div class="r" style="left:33px;top:410px;width:11px;height:1px;background:#1a2a40"></div>
<div class="r" style="left:44px;top:410px;width:1181px;height:1px;background:#a8a8a8"></div>
<div class="r" style="left:33px;top:384px;width:1px;height:27px;background:#1a2a40"></div>
<div class="r" style="left:43px;top:384px;width:1px;height:27px;background:#1a2a40"></div>
<div class="r" style="left:113px;top:384px;width:1px;height:26px;background:#a8a8a8"></div>
<div class="r" style="left:355px;top:384px;width:1px;height:26px;background:#a8a8a8"></div>
<div class="r" style="left:401px;top:384px;width:1px;height:26px;background:#a8a8a8"></div>
<div class="r" style="left:480px;top:384px;width:1px;height:26px;background:#a8a8a8"></div>
<div class="r" style="left:574px;top:384px;width:1px;height:26px;background:#a8a8a8"></div>
<div class="r" style="left:674px;top:384px;width:1px;height:26px;background:#a8a8a8"></div>
<div class="r" style="left:740px;top:384px;width:1px;height:26px;background:#a8a8a8"></div>
<div class="r" style="left:825px;top:384px;width:1px;height:26px;background:#a8a8a8"></div>
<div class="r" style="left:914px;top:384px;width:1px;height:26px;background:#a8a8a8"></div>
<div class="r" style="left:991px;top:384px;width:1px;height:26px;background:#a8a8a8"></div>
<div class="r" style="left:1079px;top:384px;width:1px;height:26px;background:#a8a8a8"></div>
<div class="t" style="left:45px;top:393px;font-size:10px;line-height:10px;color:#111;letter-spacing:0.3px">012721</div>
<div class="t" style="left:116px;top:388px;font-size:10px;line-height:10px;color:#111;letter-spacing:-0.08px">INTERRUPTOR ELETRONICO SMART WIFI TOUCH</div>
<div class="t" style="left:116px;top:399px;font-size:10px;line-height:10px;color:#111;letter-spacing:-0.08px">BRANCO EWS 1004</div>
<div class="t" style="left:358px;top:393px;font-size:10px;line-height:10px;color:#111;letter-spacing:-0.1px">UN</div>
<div class="t" style="left:379px;width:100px;text-align:right;top:393px;font-size:10px;line-height:10px;color:#111;letter-spacing:-0.1px">4,00</div>
<div class="t" style="left:473px;width:100px;text-align:right;top:393px;font-size:10px;line-height:10px;color:#111;letter-spacing:-0.1px">97,14</div>
<div class="t" style="left:573px;width:100px;text-align:right;top:393px;font-size:10px;line-height:10px;color:#111;letter-spacing:-0.1px">388,56</div>
<div class="t" style="left:743px;top:393px;font-size:10px;line-height:10px;color:#111;letter-spacing:-0.1px">088</div>
<div class="t" style="left:813px;width:100px;text-align:right;top:393px;font-size:10px;line-height:10px;color:#111;letter-spacing:-0.1px">R$ 0,00</div>
<div class="t" style="left:890px;width:100px;text-align:right;top:393px;font-size:10px;line-height:10px;color:#111;letter-spacing:-0.1px">R$ 0,00</div>
<div class="t" style="left:978px;width:100px;text-align:right;top:393px;font-size:10px;line-height:10px;color:#111;letter-spacing:-0.1px">1</div>
<div class="r" style="left:44px;top:411px;width:1181px;height:29px;background:#d9e9f6"></div>
<div class="r" style="left:33px;top:411px;width:11px;height:29px;background:#a4c4ec"></div>
<div class="r" style="left:33px;top:439px;width:11px;height:1px;background:#1a2a40"></div>
<div class="r" style="left:44px;top:439px;width:1181px;height:1px;background:#a8a8a8"></div>
<div class="r" style="left:33px;top:411px;width:1px;height:29px;background:#1a2a40"></div>
<div class="r" style="left:43px;top:411px;width:1px;height:29px;background:#1a2a40"></div>
<div class="r" style="left:113px;top:411px;width:1px;height:28px;background:#a8a8a8"></div>
<div class="r" style="left:355px;top:411px;width:1px;height:28px;background:#a8a8a8"></div>
<div class="r" style="left:401px;top:411px;width:1px;height:28px;background:#a8a8a8"></div>
<div class="r" style="left:480px;top:411px;width:1px;height:28px;background:#a8a8a8"></div>
<div class="r" style="left:574px;top:411px;width:1px;height:28px;background:#a8a8a8"></div>
<div class="r" style="left:674px;top:411px;width:1px;height:28px;background:#a8a8a8"></div>
<div class="r" style="left:740px;top:411px;width:1px;height:28px;background:#a8a8a8"></div>
<div class="r" style="left:825px;top:411px;width:1px;height:28px;background:#a8a8a8"></div>
<div class="r" style="left:914px;top:411px;width:1px;height:28px;background:#a8a8a8"></div>
<div class="r" style="left:991px;top:411px;width:1px;height:28px;background:#a8a8a8"></div>
<div class="r" style="left:1079px;top:411px;width:1px;height:28px;background:#a8a8a8"></div>
<div class="t" style="left:45px;top:421px;font-size:10px;line-height:10px;color:#111;letter-spacing:0.3px">011326</div>
<div class="t" style="left:116px;top:416px;font-size:10px;line-height:10px;color:#111;letter-spacing:-0.08px">ROTEADOR ACCESS POINT CORPORATIVO AP</div>
<div class="t" style="left:116px;top:427px;font-size:10px;line-height:10px;color:#111;letter-spacing:-0.08px">1250 AC OUTDOOR</div>
<div class="t" style="left:358px;top:421px;font-size:10px;line-height:10px;color:#111;letter-spacing:-0.1px">UN</div>
<div class="t" style="left:379px;width:100px;text-align:right;top:421px;font-size:10px;line-height:10px;color:#111;letter-spacing:-0.1px">1,00</div>
<div class="t" style="left:473px;width:100px;text-align:right;top:421px;font-size:10px;line-height:10px;color:#111;letter-spacing:-0.1px">461,022</div>
<div class="t" style="left:573px;width:100px;text-align:right;top:421px;font-size:10px;line-height:10px;color:#111;letter-spacing:-0.1px">461,02</div>
<div class="t" style="left:743px;top:421px;font-size:10px;line-height:10px;color:#111;letter-spacing:-0.1px">294</div>
<div class="t" style="left:978px;width:100px;text-align:right;top:421px;font-size:10px;line-height:10px;color:#111;letter-spacing:-0.1px">1</div>
<svg class="r" style="left:37px;top:349px" width="5" height="9"><path d="M0 0 L5 4.5 L0 9Z" fill="#000"/></svg>
<svg class="r" style="left:15px;top:294px" width="14" height="14"><circle cx="7" cy="7" r="6.5" fill="#1e9e3e"/><path d="M7 3 V11 M3 7 H11" stroke="#fff" stroke-width="2.4"/></svg>
<svg class="r" style="left:15px;top:314px" width="14" height="13"><rect x="0.5" y="0.5" width="10" height="11" fill="#f4f4f4" stroke="#dde" stroke-width="0.5"/><rect x="0" y="0" width="11" height="1.2" fill="#3060c0"/><path d="M2.5 4 H7 M2.5 6.5 H7 M2.5 9 H5.5" stroke="#2060d0" stroke-width="1.3"/><path d="M6 12 L12.5 5.5" stroke="#f0a020" stroke-width="2"/><path d="M12 5 L13.5 3.8" stroke="#e03030" stroke-width="1.6"/></svg>
<svg class="r" style="left:15px;top:336px" width="14" height="13"><path d="M0.5 0.5 H13.5 L11.5 12.5 H2.5Z" fill="#c8d4dc" stroke="#8c969c" stroke-width="0.8"/><rect x="0" y="0" width="14" height="2.2" fill="#8a9096"/><path d="M3 4 L10.5 11 M11 4 L3.5 11 M7 3 V12" stroke="#f2f6f8" stroke-width="0.8"/></svg>
<svg class="r" style="left:15px;top:354px" width="14" height="13"><rect x="0.5" y="0.5" width="10" height="11" fill="#f4f4f4" stroke="#dde" stroke-width="0.5"/><rect x="0" y="0" width="11" height="1.2" fill="#3060c0"/><path d="M2.5 4 H7 M2.5 6.5 H7 M2.5 9 H5.5" stroke="#2060d0" stroke-width="1.3"/><path d="M6 12 L12.5 5.5" stroke="#f0a020" stroke-width="2"/><path d="M12 5 L13.5 3.8" stroke="#e03030" stroke-width="1.6"/></svg>
<svg class="r" style="left:15px;top:374px" width="14" height="14"><circle cx="7" cy="7" r="6.5" fill="#1e90e8"/><rect x="5.9" y="5.8" width="2.3" height="5.5" fill="#fff"/><circle cx="7" cy="3.6" r="1.3" fill="#fff"/></svg>
<svg class="r" style="left:16px;top:393px" width="13" height="14"><path d="M0.5 0.5 H7.5 L10.5 3.5 V13 H0.5Z" fill="#fff" stroke="#333" stroke-width="0.8"/><circle cx="10" cy="11" r="2.5" fill="#5ab4f0"/><path d="M10 9.5 V12.5 M8.5 11 H11.5" stroke="#fff" stroke-width="0.8"/></svg>
<svg class="r" style="left:15px;top:414px" width="14" height="12"><rect x="0" y="0.5" width="14" height="10" fill="#e84a2a"/><path d="M1.5 1 H6.8 V9.5 H1.5Z M7.2 1 H12.5 V9.5 H7.2Z" fill="#f2efe8"/><rect x="6" y="10" width="2" height="2" fill="#222"/></svg>
<div class="r" style="left:17px;top:434px;width:10px;height:13px;background:#8cc4f4"></div>
<div class="r" style="left:15px;top:445px;width:10px;height:2px;background:#2a8ae8"></div>
<div class="r" style="left:33px;top:440px;width:1192px;height:7px;background:#a6c4ea"></div>
<div class="r" style="left:0px;top:447px;width:1238px;height:1px;background:#000"></div>
<div class="r" style="left:266px;top:76px;width:195px;height:47px;background:rgba(0,0,0,0.18);filter:blur(1.5px)"></div>
<div class="r" style="left:263px;top:73px;width:194px;height:46px;background:#f0f0f0;border:1px solid #c8c8c8;box-sizing:border-box"></div>
<div class="r" style="left:264px;top:95px;width:196px;height:24px;background:#f2ec58;border-top:1px solid #efbf00;border-left:1px solid #efbf00;box-sizing:border-box"></div>
<div class="r" style="left:264px;top:118px;width:197px;height:2px;background:#8a7a20;opacity:0.6"></div>
<div class="r" style="left:459px;top:96px;width:2px;height:23px;background:#8a7a20;opacity:0.5"></div>
<svg class="r" style="left:269px;top:80px" width="14" height="12"><rect x="3" y="0" width="7" height="3.5" fill="#34e6fc"/><rect x="2" y="0.8" width="1.3" height="2.6" fill="#1060d0"/><rect x="9.7" y="0.8" width="1.3" height="2.6" fill="#1060d0"/><rect x="0" y="3.2" width="13" height="6.2" fill="#6a6e74"/><rect x="3" y="7.5" width="7" height="4" fill="#34e6fc"/><rect x="0" y="8.6" width="3" height="1.6" fill="#3a3a3a"/><rect x="10" y="8.6" width="3" height="1.6" fill="#3a3a3a"/><rect x="10.2" y="4.5" width="1.3" height="1.6" fill="#40b8f0"/></svg>
<svg class="r" style="left:269px;top:101px" width="14" height="12"><rect x="3" y="0" width="7" height="3.5" fill="#3ee07a"/><rect x="2" y="0.8" width="1.3" height="2.6" fill="#1060d0"/><rect x="9.7" y="0.8" width="1.3" height="2.6" fill="#1060d0"/><rect x="0" y="3.2" width="13" height="6.2" fill="#5e6a3a"/><rect x="3" y="7.5" width="7" height="4" fill="#3ee07a"/><rect x="0" y="8.6" width="3" height="1.6" fill="#3a3a3a"/><rect x="10" y="8.6" width="3" height="1.6" fill="#3a3a3a"/><rect x="10.2" y="4.5" width="1.3" height="1.6" fill="#40b8f0"/></svg>
<div class="t" style="left:294px;top:81px;font-size:11px;line-height:11px;color:#1a1020;letter-spacing:-0.35px">Espelho da Transferência</div>
<div class="t" style="left:294px;top:101px;font-size:11px;line-height:11px;color:#1a1020;letter-spacing:-0.3px">Emissão de Etiquetas</div>
</div></div>
<div class="r" style="left:207px;top:474px;width:771px;height:1px;background:#000"></div>
<div class="r" style="left:207px;top:474px;width:2px;height:184px;background:#000"></div>
<div class="r" style="left:977px;top:474px;width:1px;height:184px;background:#000"></div>
<div class="r" style="left:207px;top:657px;width:771px;height:1px;background:#000"></div>
<div class="r" style="left:200px;top:552px;width:154px;height:4px;background:#fff"></div>
<div class="r" style="left:200px;top:600px;width:154px;height:4px;background:#fff"></div>
<div class="r" style="left:350px;top:552px;width:4px;height:52px;background:#fff"></div></body></html>
